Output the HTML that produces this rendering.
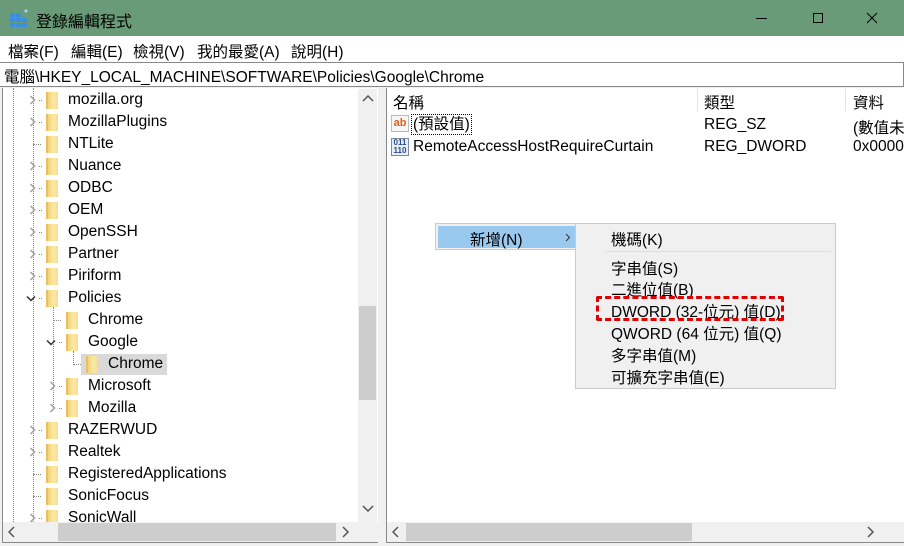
<!DOCTYPE html><html><head><meta charset="utf-8"><style>
*{margin:0;padding:0;box-sizing:border-box}
body{width:904px;height:546px;overflow:hidden;background:#f0f0f0;font-family:"Liberation Sans","Noto Sans CJK TC",sans-serif;font-size:15.5px;color:#000;position:relative}
.a{position:absolute;white-space:nowrap}
.f{position:absolute;width:12px;height:17px;background:linear-gradient(90deg,#f3d37a,#fbe9a8 60%,#f6dc8c);border-left:2px solid #e8c060}
.t{position:absolute;line-height:20px}
.dv{position:absolute;border-left:1px dotted #888}
.dh{position:absolute;border-top:1px dotted #888;width:6px}
svg.c{position:absolute}
</style></head><body>
<div class="a" style="left:0;top:0;width:904px;height:36px;background:#6a9b78"></div>
<svg class="a" style="left:10px;top:9px" width="20" height="18"><g fill="#3a8fd8"><rect x="0" y="4" width="5" height="4"/><rect x="6" y="4" width="5" height="4"/><rect x="0" y="9" width="5" height="4"/><rect x="6" y="9" width="5" height="4"/><rect x="12" y="9" width="5" height="4"/><rect x="0" y="14" width="5" height="4"/><rect x="6" y="14" width="5" height="4"/><rect x="12" y="14" width="5" height="4"/></g><path d="M16 0l2 2-2 2-2-2z" fill="#9fd0ff"/></svg>
<div class="a" style="left:36px;top:8px;font-size:16px">登錄編輯程式</div>
<div class="a" style="left:756px;top:18px;width:11px;border-top:1px solid #000"></div>
<div class="a" style="left:813px;top:13px;width:10px;height:10px;border:1px solid #000"></div>
<svg class="a" style="left:866px;top:12px" width="12" height="12"><path d="M1 1L11 11M11 1L1 11" stroke="#000"/></svg>
<div class="a" style="left:0;top:36px;width:904px;height:26px;background:#fff"></div>
<div class="a" style="left:8px;top:40px">檔案(F)</div>
<div class="a" style="left:71px;top:40px">編輯(E)</div>
<div class="a" style="left:133px;top:40px">檢視(V)</div>
<div class="a" style="left:197px;top:40px">我的最愛(A)</div>
<div class="a" style="left:291px;top:40px">說明(H)</div>
<div class="a" style="left:0;top:62px;width:904px;height:25px;background:#fff;border:1px solid #888;border-left:none"></div>
<div class="a" style="left:4px;top:65px">電腦\HKEY_LOCAL_MACHINE\SOFTWARE\Policies\Google\Chrome</div>
<div class="a" style="left:2px;top:88px;width:376px;height:455px;background:#fff;border-left:1px solid #888;border-bottom:1px solid #888"></div>
<div class="a" style="left:386px;top:88px;width:518px;height:455px;background:#fff;border-left:1px solid #888;border-bottom:1px solid #888"></div>
<div class="dv" style="left:13px;top:88px;height:434px"></div>
<div class="dv" style="left:33px;top:88px;height:434px"></div>
<div class="dv" style="left:53px;top:307px;height:100px"></div>
<div class="dv" style="left:73px;top:351px;height:12px"></div>
<div id="tree"></div>
<div class="a" style="left:358px;top:89px;width:19px;height:433px;background:#f0f0f0"></div>
<div class="a" style="left:359px;top:306px;width:17px;height:94px;background:#cdcdcd"></div>
<svg class="c" style="left:362px;top:95px" width="12" height="8"><path d="M1 6L6 1L11 6" stroke="#555" stroke-width="1.5" fill="none"/></svg>
<svg class="c" style="left:362px;top:505px" width="12" height="8"><path d="M1 1L6 6L11 1" stroke="#555" stroke-width="1.5" fill="none"/></svg>
<div class="a" style="left:3px;top:522px;width:375px;height:20px;background:#f0f0f0"></div>
<div class="a" style="left:58px;top:523px;width:278px;height:18px;background:#cdcdcd"></div>
<svg class="c" style="left:8px;top:526px" width="8" height="12"><path d="M6 1L1 6L6 11" stroke="#555" stroke-width="1.5" fill="none"/></svg>
<svg class="c" style="left:342px;top:526px" width="8" height="12"><path d="M1 1L6 6L1 11" stroke="#555" stroke-width="1.5" fill="none"/></svg>
<div class="a" style="left:358px;top:522px;width:20px;height:20px;background:#f0f0f0"></div>
<div class="a" style="left:393px;top:91px">名稱</div>
<div class="a" style="left:697px;top:89px;height:22px;border-left:1px solid #e5e5e5"></div>
<div class="a" style="left:704px;top:91px">類型</div>
<div class="a" style="left:845px;top:89px;height:22px;border-left:1px solid #e5e5e5"></div>
<div class="a" style="left:853px;top:91px">資料</div>
<div class="a" style="left:391px;top:115px;width:18px;height:17px;background:#f6f6f6;border:1px solid #bbb;color:#e06020;font-weight:bold;font-size:11px;line-height:14px;text-align:center">ab</div>
<div class="a" style="left:411px;top:114px;border:1px dotted #000;padding:0 1px;line-height:19px">(預設值)</div>
<div class="a" style="left:704px;top:116px">REG_SZ</div>
<div class="a" style="left:853px;top:116px">(數值未</div>
<div class="a" style="left:391px;top:138px;width:18px;height:18px;background:#e8eef6;border:1px solid #7a8aa6;color:#2a4a8a;font-size:8px;line-height:8px;text-align:center;font-weight:bold">011<br>110</div>
<div class="a" style="left:413px;top:138px">RemoteAccessHostRequireCurtain</div>
<div class="a" style="left:704px;top:138px">REG_DWORD</div>
<div class="a" style="left:853px;top:138px">0x0000</div>
<div class="a" style="left:387px;top:522px;width:517px;height:20px;background:#f0f0f0"></div>
<div class="a" style="left:406px;top:523px;width:286px;height:18px;background:#cdcdcd"></div>
<svg class="c" style="left:392px;top:526px" width="8" height="12"><path d="M6 1L1 6L6 11" stroke="#555" stroke-width="1.5" fill="none"/></svg>
<svg class="c" style="left:867px;top:526px" width="8" height="12"><path d="M1 1L6 6L1 11" stroke="#555" stroke-width="1.5" fill="none"/></svg>
<div class="a" style="left:435px;top:223px;width:142px;height:27px;background:#f0f0f0;border:1px solid #ccc"></div>
<div class="a" style="left:438px;top:226px;width:138px;height:22px;background:#99c9ef"></div>
<div class="a" style="left:470px;top:228px">新增(N)</div>
<svg class="c" style="left:565px;top:233px" width="6" height="9"><path d="M1 1L4.5 4.5L1 8" stroke="#333" fill="none"/></svg>
<div class="a" style="left:575px;top:223px;width:261px;height:166px;background:#f0f0f0;border:1px solid #ccc"></div>
<div class="a" style="left:606px;top:251px;width:225px;border-top:1px solid #ddd"></div>
<div class="a" style="left:611px;top:228px">機碼(K)</div>
<div class="a" style="left:611px;top:257px">字串值(S)</div>
<div class="a" style="left:611px;top:278px">二進位值(B)</div>
<div class="a" style="left:611px;top:300px">DWORD (32-位元) 值(D)</div>
<div class="a" style="left:611px;top:322px">QWORD (64 位元) 值(Q)</div>
<div class="a" style="left:611px;top:344px">多字串值(M)</div>
<div class="a" style="left:611px;top:366px">可擴充字串值(E)</div>
<div class="a" style="left:596px;top:296px;width:188px;height:25px;border:3px dashed #e00000;border-radius:2px"></div>
<script>
var r=[[1,'mozilla.org',1],[1,'MozillaPlugins',1],[1,'NTLite',0],[1,'Nuance',1],[1,'ODBC',1],[1,'OEM',1],[1,'OpenSSH',1],[1,'Partner',1],[1,'Piriform',1],[1,'Policies',2],[2,'Chrome',0],[2,'Google',2],[3,'Chrome',0],[2,'Microsoft',1],[2,'Mozilla',1],[1,'RAZERWUD',1],[1,'Realtek',1],[1,'RegisteredApplications',0],[1,'SonicFocus',0],[1,'SonicWall',1]];
var h='';r.forEach(function(e,i){var y=89+i*22,l=e[0],x=26+l*20;
if(l==3)h+='<div class="a" style="left:81px;top:'+(y+1)+'px;width:86px;height:21px;background:#d9d9d9"></div>';
if(e[2]==1)h+='<svg class="c" style="left:'+(x-17)+'px;top:'+(y+6)+'px" width="8" height="11"><path d="M1.5 1L5.5 5L1.5 9" stroke="#a0a0a0" stroke-width="1.5" fill="none"/></svg><div class="dh" style="left:'+(x-7)+'px;top:'+(y+11)+'px;width:3px"></div>';
else if(e[2]==2)h+='<svg class="c" style="left:'+(x-20)+'px;top:'+(y+8)+'px" width="11" height="8"><path d="M1 1.5L5 5.5L9 1.5" stroke="#333" stroke-width="1.5" fill="none"/></svg><div class="dh" style="left:'+(x-7)+'px;top:'+(y+11)+'px;width:3px"></div>';
else h+='<div class="dh" style="left:'+(x-13)+'px;top:'+(y+11)+'px;width:8px"></div>';
h+='<div class="f" style="left:'+x+'px;top:'+(y+3)+'px"></div><div class="t" style="left:'+(x+22)+'px;top:'+(y+1)+'px">'+e[1]+'</div>';});
document.getElementById('tree').innerHTML=h;
</script>
</body></html>
